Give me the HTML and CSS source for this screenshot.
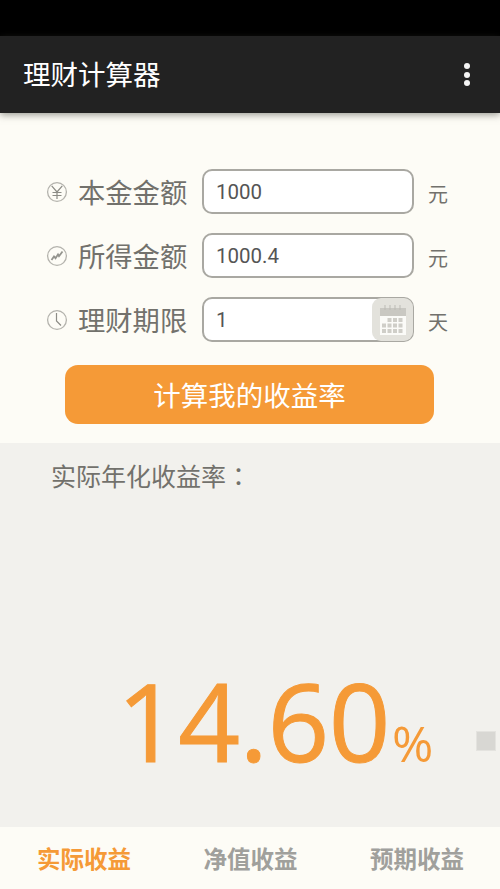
FILE: index.html
```html
<!DOCTYPE html>
<html lang="zh">
<head>
<meta charset="utf-8">
<title>理财计算器</title>
<link rel="stylesheet" href="styles.css">
</head>
<body>
<div class="app">
  <div class="status"></div>
  <header class="toolbar">
    <h1 class="title">理财计算器</h1>
    <div class="overflow"><i></i><i></i><i></i></div>
  </header>
  <section class="form">
    <div class="rows">
      <div class="row">
        <svg class="ico" viewBox="0 0 22 22"><circle class="ring" cx="11" cy="11" r="9.400"/><path d="M5.700 4.800 11 11l5.300-6.200M11 11v7M6.500 11.500h9M6.500 14.500h9"/></svg>
        <span class="label">本金金额</span>
        <div class="input">1000</div>
        <span class="unit">元</span>
      </div>
      <div class="row">
        <svg class="ico" viewBox="0 0 22 22"><circle class="ring" cx="11" cy="11" r="9.400"/><path class="zig" d="M5.500 15 8 11.500l1.500 1.700L12 9.500l1 1.700 3.500-4.700"/></svg>
        <span class="label">所得金额</span>
        <div class="input">1000.4</div>
        <span class="unit">元</span>
      </div>
      <div class="row">
        <svg class="ico" viewBox="0 0 22 22"><circle class="ring" cx="11" cy="11" r="9.400"/><path d="M10.500 4V12l4.500 4.500"/></svg>
        <span class="label">理财期限</span>
        <div class="input">1
          <div class="cal">
            <svg viewBox="0 0 28 34" class="cal-svg">
              <rect class="cal-head" x="1" y="5" width="26" height="10"/>
              <path class="cal-pins" d="M6 2v5M11 2v5M16 2v5M21 2v5"/>
              <rect class="cal-body" x="1" y="13" width="26" height="19"/>
              <path class="cal-dots" d="M8.500 15h4v4h-4zM14 15h4v4h-4zM19.500 15h4v4h-4zM3 20.500h4v4H3zM8.500 20.500h4v4h-4zM14 20.500h4v4h-4zM19.500 20.500h4v4h-4zM3 26h4v4H3zM8.500 26h4v4h-4zM14 26h4v4h-4zM19.500 26h4v4h-4z"/>
            </svg>
          </div>
        </div>
        <span class="unit">天</span>
      </div>
    </div>
    <button class="calc">计算我的收益率</button>
  </section>
  <section class="result">
    <p class="result-label">实际年化收益率<span class="colon" lang="zh-Hant">：</span></p>
    <div class="figure"><span class="num">14.60</span><span class="pct">%</span></div>
    <div class="scroll-thumb"></div>
  </section>
  <nav class="tabs">
    <span class="tab active">实际收益</span>
    <span class="tab">净值收益</span>
    <span class="tab">预期收益</span>
  </nav>
</div>
</body>
</html>
```
FILE: styles.css
```css
* { box-sizing: border-box; }
html, body { margin: 0; padding: 0; }
body { width: 500px; height: 889px; overflow: hidden; font-family: "Roboto", "Noto Sans CJK SC", sans-serif; }
.app { width: 500px; height: 889px; display: flex; flex-direction: column; background: #fdfcf6; overflow: hidden; }
.status { height: 36px; background: #000; }
.toolbar { height: 77px; background: #222; display: flex; align-items: center; justify-content: space-between; padding: 0 30px 0 23px; position: relative; box-shadow: 0 2px 7px rgba(60,60,50,.5); }
.title { margin: 0; padding-top: 2px; font-size: 27.5px; font-weight: 400; color: #fff; line-height: 1; }
.overflow { display: flex; flex-direction: column; gap: 2.500px; }
.overflow i { display: block; width: 6px; height: 6px; border-radius: 50%; background: #f4f4f4; }
.form { height: 330px; padding: 56px 0 0 46px; }
.rows { display: flex; flex-direction: column; gap: 19px; }
.row { display: flex; align-items: center; height: 45px; }
.ico { width: 22px; height: 22px; fill: none; stroke: #8c8c86; stroke-width: 1.2; flex: none; }
.ring { stroke: #b4b3ad; stroke-width: 1.300; }
.zig { stroke: #94948e; stroke-width: 1.800; }
.label { width: 134px; padding: 7px 0 0 10px; font-size: 27.3px; color: #72716c; line-height: 1; white-space: nowrap; flex: none; }
.input { width: 212px; height: 45px; margin-right: 14px; border: 2px solid #a9a8a2; border-radius: 10px; background: #fff; padding-left: 12px; font-size: 20.500px; color: #555; line-height: 42px; position: relative; flex: none; }
.cal { position: absolute; top: -1px; right: -1px; width: 41px; height: 43px; background: #e3e2dc; border-radius: 9px; display: flex; align-items: center; justify-content: center; }
.cal-svg { width: 28px; height: 34px; }
.cal-head { fill: #c9c8c2; }
.cal-pins { stroke: #bcbbb5; stroke-width: 1; fill: none; }
.cal-body { fill: #fbfbf8; }
.cal-dots { fill: #cfcec8; }
.unit { padding-top: 7px; font-size: 20px; color: #72716c; line-height: 1; }
.calc { display: block; margin: 23px 0 0 19px; width: 369px; height: 59px; border: 0; border-radius: 13px; background: #f59a37; color: #fff; font: inherit; font-size: 27.500px; line-height: 1; padding: 4px 0 0; }
.result { height: 384px; background: #f2f1ed; padding: 18px 0 0 51px; position: relative; }
.result-label { margin: 0; font-size: 25px; color: #72716c; line-height: 28px; }
.colon { font-family: "Noto Sans CJK TC", sans-serif; }
.figure { position: absolute; left: 117px; top: 224px; display: flex; align-items: baseline; color: #f59a37; line-height: 1; white-space: nowrap; }
.num { font-family: "Open Sans", sans-serif; font-size: 108px; -webkit-text-stroke: 1px #f59a37; letter-spacing: -0.500px; }
.pct { font-family: "Open Sans", sans-serif; font-size: 50px; margin-left: 2px; }
.scroll-thumb { position: absolute; left: 476px; top: 288px; width: 20px; height: 20px; background: #d8d7d3; border: 1px solid #e4e3df; }
.tabs { height: 62px; display: flex; background: #fdfcf6; align-items: center; justify-content: space-between; padding: 5px 36px 0 37px; }
.tab { font-size: 23.500px; color: #a0a09c; font-weight: 700; line-height: 1; flex: none; }
.tab.active { color: #f59a37; }
```
